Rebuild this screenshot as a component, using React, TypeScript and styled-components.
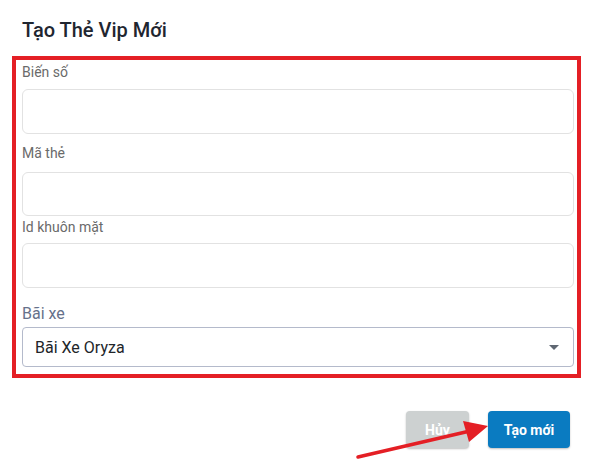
import React from "react";
import styled, { createGlobalStyle } from "styled-components";

const Global = createGlobalStyle`
  html, body { margin: 0; padding: 0; background: #ffffff; }
  body { font-family: Roboto, "Noto Sans", "Liberation Sans", sans-serif; }
  * { box-sizing: border-box; }
`;

const Page = styled.div`
  position: relative;
  width: 597px;
  height: 464px;
  background: #ffffff;
  overflow: hidden;
`;

const Title = styled.h1`
  margin: 0;
  padding: 18px 0 0 22px;
  height: 56px;
  font-size: 20px;
  font-weight: 500;
  line-height: 24px;
  color: #1f2630;
`;

const Highlight = styled.div`
  margin-left: 12px;
  width: 569px;
  border: 4px solid #e41f25;
  padding: 0 3px 7px 6px;
  display: flex;
  flex-direction: column;
`;

const Field = styled.div<{ $top: number }>`
  display: flex;
  flex-direction: column;
  margin-top: ${(p) => p.$top}px;
`;

const Label = styled.label<{ $gap: number; $big?: boolean }>`
  font-size: ${(p) => (p.$big ? "16px" : "14px")};
  line-height: 20px;
  color: ${(p) => (p.$big ? "#66718a" : "#6a6a6a")};
  margin-bottom: ${(p) => p.$gap}px;
`;

const Input = styled.div<{ $h: number }>`
  height: ${(p) => p.$h}px;
  border: 1px solid #e2e2e2;
  border-radius: 6px;
  background: #ffffff;
`;

const Select = styled.div`
  height: 40px;
  border: 1px solid #b4bacb;
  border-radius: 4px;
  display: flex;
  align-items: center;
  justify-content: space-between;
  padding: 0 14px 0 12px;
  font-size: 16px;
  color: #212529;
`;

const Caret = styled.span`
  width: 0;
  height: 0;
  border-left: 5px solid transparent;
  border-right: 5px solid transparent;
  border-top: 5px solid #5f6772;
`;

const Actions = styled.div`
  display: flex;
  justify-content: flex-end;
  gap: 19px;
  padding: 33px 27px 0 0;
`;

const Button = styled.button<{ $primary?: boolean; $w: number }>`
  width: ${(p) => p.$w}px;
  height: 37px;
  border: none;
  border-radius: 4px;
  font-family: Roboto, "Liberation Sans", sans-serif;
  font-size: 14px;
  font-weight: 700;
  color: #ffffff;
  background: ${(p) => (p.$primary ? "#0a7bc1" : "#cdd1d1")};
  box-shadow: 0 1px 2px rgba(0, 0, 0, 0.25);
`;

const ArrowLayer = styled.svg`
  position: absolute;
  left: 0;
  top: 0;
  pointer-events: none;
`;

export default function App() {
  return (
    <Page>
      <Global />
      <Title>Tạo Thẻ Vip Mới</Title>
      <Highlight>
        <Field $top={2}>
          <Label $gap={7}>Biến số</Label>
          <Input $h={45} />
        </Field>
        <Field $top={9}>
          <Label $gap={9}>Mã thẻ</Label>
          <Input $h={44} />
        </Field>
        <Field $top={1}>
          <Label $gap={6}>Id khuôn mặt</Label>
          <Input $h={45} />
        </Field>
        <Field $top={16}>
          <Label $big $gap={3}>Bãi xe</Label>
          <Select>
            <span>Bãi Xe Oryza</span>
            <Caret />
          </Select>
        </Field>
      </Highlight>
      <Actions>
        <Button $w={63}>Hủy</Button>
        <Button $primary $w={82}>Tạo mới</Button>
      </Actions>
      <ArrowLayer width="597" height="464" viewBox="0 0 597 464">
        <line x1="358" y1="457" x2="470" y2="431" stroke="#e41f25" strokeWidth="3.5" strokeLinecap="round" />
        <polygon points="488,426 463,421 469,442" fill="#e41f25" />
      </ArrowLayer>
    </Page>
  );
}
